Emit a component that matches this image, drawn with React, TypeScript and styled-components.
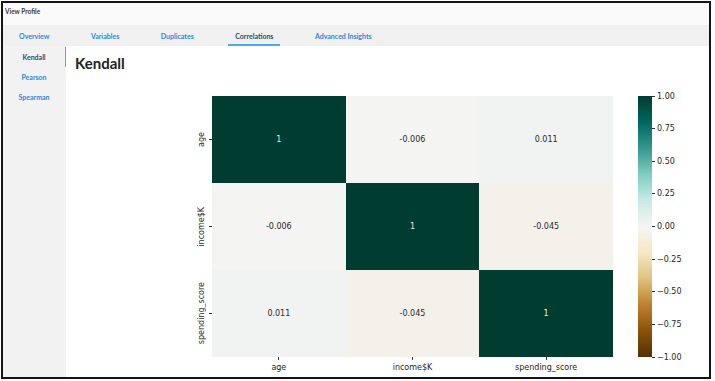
import React from "react";
import styled, { createGlobalStyle } from "styled-components";

const Global = createGlobalStyle`
  html, body { margin: 0; padding: 0; background: #ffffff; }
  body { font-family: Lato, "Noto Sans", sans-serif; }
  * { box-sizing: border-box; }
`;

const Frame = styled.div`
  margin: 1px 0 0 1px;
  width: 710px;
  height: 378px;
  border: 2px solid #141414;
  display: flex;
  flex-direction: column;
  overflow: hidden;
  background: #ffffff;
`;

const Header = styled.div`
  height: 22px;
  flex: none;
  background: #fafafa;
  padding: 5px 0 0 2px;
  font-weight: 700;
  font-size: 6.5px;
  color: #3a3a3a;
  line-height: 8px;
`;

const TabBar = styled.nav`
  height: 21px;
  flex: none;
  background: #f0f0f0;
  display: flex;
  align-items: stretch;
  padding-left: 9px;
  gap: 27.5px;
`;

const Tab = styled.div<{ $active?: boolean }>`
  display: flex;
  align-items: center;
  padding: 2px 7px 0;
  font-size: 7px;
  font-weight: 700;
  color: ${(p) => (p.$active ? "#2c4d70" : "#2f86e0")};
  border-bottom: 2px solid ${(p) => (p.$active ? "#4aa9f2" : "transparent")};
`;

const Body = styled.div`
  flex: 1;
  display: flex;
  min-height: 0;
`;

const Sidebar = styled.aside`
  width: 63px;
  flex: none;
  background: #f2f2f2;
  padding-top: 1px;
  display: flex;
  flex-direction: column;
`;

const SideItem = styled.div<{ $active?: boolean }>`
  height: 20px;
  display: flex;
  align-items: center;
  justify-content: center;
  font-size: 7px;
  font-weight: 700;
  color: ${(p) => (p.$active ? "#2c4d70" : "#2f86e0")};
  border-right: 1.5px solid ${(p) => (p.$active ? "#4aa9f2" : "transparent")};
`;

const Main = styled.main`
  flex: 1;
  padding: 8px 0 0 9px;
  display: flex;
  flex-direction: column;
`;

const Title = styled.h1`
  margin: 0;
  font-size: 15px;
  line-height: 18px;
  font-weight: 700;
  color: #222222;
`;

const Chart = styled.div`
  margin: 24px 0 0 121px;
  display: flex;
  align-items: flex-start;
  font-family: "DejaVu Sans", sans-serif;
  color: #262626;
`;

const PlotArea = styled.div`
  display: grid;
  grid-template-columns: 16px 401px;
  grid-template-rows: 261px auto;
`;

const YAxis = styled.div`
  display: grid;
  grid-template-rows: repeat(3, 1fr);
`;

const YTick = styled.div`
  display: flex;
  align-items: center;
  justify-content: flex-end;
  gap: 2px;
`;

const YLabel = styled.span`
  writing-mode: vertical-rl;
  transform: rotate(180deg);
  font-size: 8px;
  line-height: 10px;
  color: #2a2a2a;
  white-space: nowrap;
`;

const TickH = styled.span`
  width: 3px;
  height: 0.8px;
  background: #333;
`;

const Grid = styled.div`
  display: grid;
  grid-template-columns: repeat(3, 1fr);
  grid-template-rows: repeat(3, 1fr);
`;

const Cell = styled.div<{ $bg: string; $light?: boolean }>`
  background: ${(p) => p.$bg};
  display: flex;
  align-items: center;
  justify-content: center;
  font-size: 8px;
  color: ${(p) => (p.$light ? "#e6ece9" : "#2a2a2a")};
`;

const XAxis = styled.div`
  grid-column: 2;
  display: grid;
  grid-template-columns: repeat(3, 1fr);
`;

const XTick = styled.div`
  display: flex;
  flex-direction: column;
  align-items: center;
  gap: 3px;
  font-size: 8px;
  line-height: 10px;
`;

const TickV = styled.span`
  width: 0.8px;
  height: 3px;
  background: #333;
`;

const ColorBarWrap = styled.div`
  margin-left: 25px;
  display: flex;
  height: 261px;
`;

const ColorBar = styled.div`
  width: 14px;
  height: 100%;
  background: linear-gradient(
    to top,
    #543005 0%,
    #8c510a 10%,
    #bf812d 20%,
    #dfc27d 30%,
    #f6e8c3 40%,
    #f5f5f5 50%,
    #c7eae5 60%,
    #80cdc1 70%,
    #35978f 80%,
    #01665e 90%,
    #003c30 100%
  );
`;

const CbTicks = styled.div`
  display: flex;
  flex-direction: column;
  justify-content: space-between;
  height: 100%;
`;

const CbTick = styled.div`
  height: 0;
  display: flex;
  align-items: center;
  gap: 2px;
  font-size: 8px;
  white-space: nowrap;
`;

const labels = ["age", "income$K", "spending_score"];

const cells: { v: string; bg: string; light?: boolean }[] = [
  { v: "1", bg: "#003c30", light: true },
  { v: "-0.006", bg: "#f4f4f3" },
  { v: "0.011", bg: "#f1f3f2" },
  { v: "-0.006", bg: "#f4f4f3" },
  { v: "1", bg: "#003c30", light: true },
  { v: "-0.045", bg: "#f4f1ea" },
  { v: "0.011", bg: "#f1f3f2" },
  { v: "-0.045", bg: "#f4f1ea" },
  { v: "1", bg: "#003c30", light: true },
];

const cbLabels = ["1.00", "0.75", "0.50", "0.25", "0.00", "\u22120.25", "\u22120.50", "\u22120.75", "\u22121.00"];

const tabs = ["Overview", "Variables", "Duplicates", "Correlations", "Advanced Insights"];

export default function App() {
  return (
    <>
      <Global />
      <Frame>
        <Header>View Profile</Header>
        <TabBar>
          {tabs.map((t) => (
            <Tab key={t} $active={t === "Correlations"}>
              {t}
            </Tab>
          ))}
        </TabBar>
        <Body>
          <Sidebar>
            <SideItem $active>Kendall</SideItem>
            <SideItem>Pearson</SideItem>
            <SideItem>Spearman</SideItem>
          </Sidebar>
          <Main>
            <Title>Kendall</Title>
            <Chart>
              <PlotArea>
                <YAxis>
                  {labels.map((l) => (
                    <YTick key={l}>
                      <YLabel>{l}</YLabel>
                      <TickH />
                    </YTick>
                  ))}
                </YAxis>
                <Grid>
                  {cells.map((c, i) => (
                    <Cell key={i} $bg={c.bg} $light={c.light}>
                      {c.v}
                    </Cell>
                  ))}
                </Grid>
                <XAxis>
                  {labels.map((l) => (
                    <XTick key={l}>
                      <TickV />
                      {l}
                    </XTick>
                  ))}
                </XAxis>
              </PlotArea>
              <ColorBarWrap>
                <ColorBar />
                <CbTicks>
                  {cbLabels.map((l) => (
                    <CbTick key={l}>
                      <TickH />
                      {l}
                    </CbTick>
                  ))}
                </CbTicks>
              </ColorBarWrap>
            </Chart>
          </Main>
        </Body>
      </Frame>
    </>
  );
}
